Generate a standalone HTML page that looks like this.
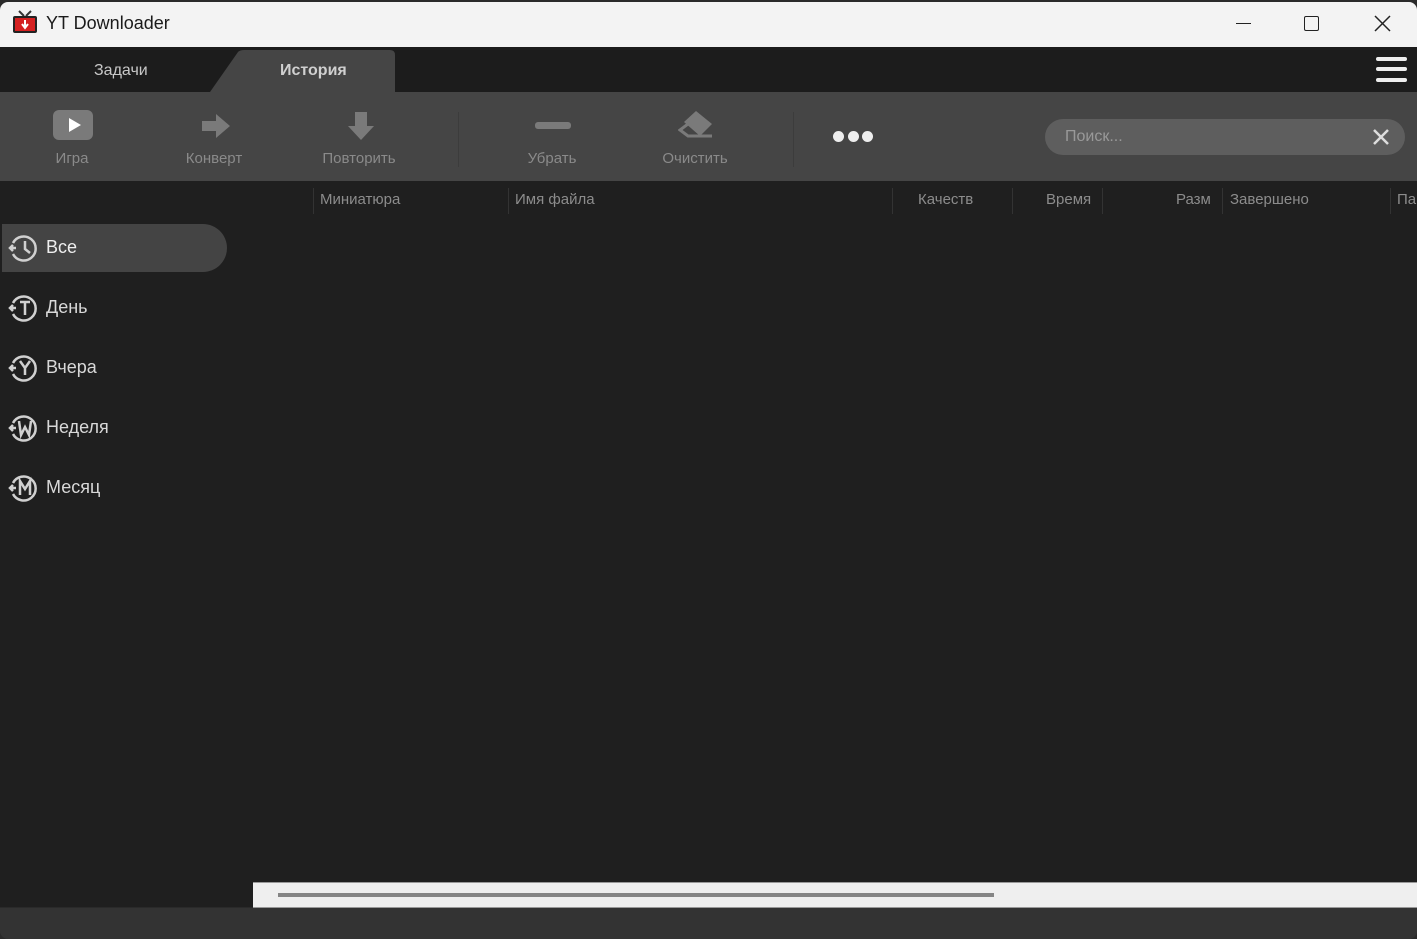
<!DOCTYPE html>
<html><head><meta charset="utf-8">
<style>
*{margin:0;padding:0;box-sizing:border-box}
body{width:1417px;height:939px;background:#2a2a2a;position:relative;overflow:hidden;font-family:"Liberation Sans","DejaVu Sans",sans-serif}
.abs{position:absolute}
.title{left:0;top:2px;width:1417px;height:45px;background:#f3f3f3;border-radius:8px 8px 0 0}
.ttext{left:46px;top:13px;font-size:18px;color:#1a1a1a}
.tabs{left:0;top:47px;width:1417px;height:45px;background:#1c1c1c}
.toolbar{left:0;top:92px;width:1417px;height:89px;background:#454545}
.body{left:0;top:181px;width:1417px;height:726px;background:#1f1f1f}
.lbl{font-size:15px;color:#8a8a8a;text-align:center}
.hdr{font-size:15px;color:#8c8c8c;top:191px}
.sep{width:1px;height:26px;background:#333;top:188px}
.side{font-size:18px;color:#d8d8d8;left:46px}
</style></head><body>
<div class="abs title"></div>
<svg class="abs" style="left:12px;top:9px" width="26" height="26" viewBox="0 0 26 26"><path d="M7 2l5 5M19 2l-5 5" stroke="#333" stroke-width="2"/><rect x="1" y="7" width="24" height="17" rx="2" fill="#222"/><rect x="3" y="9" width="20" height="13" fill="#d42020"/><path d="M13 11v7M10 15l3 4 3-4" stroke="#fff" stroke-width="2" fill="none"/></svg>
<div class="abs ttext">YT Downloader</div>
<div class="abs" style="left:1236px;top:23px;width:15px;height:1px;background:#222"></div>
<div class="abs" style="left:1304px;top:16px;width:15px;height:15px;border:1.5px solid #222;border-radius:2px"></div>
<svg class="abs" style="left:1374px;top:15px" width="17" height="17"><path d="M1 1L16 16M16 1L1 16" stroke="#222" stroke-width="1.5"/></svg>

<div class="abs tabs"></div>
<svg class="abs" style="left:210px;top:50px" width="186" height="42"><path d="M0 42L28 2Q30 0 34 0H180Q185 0 185 5V42Z" fill="#454545"/></svg>
<div class="abs" style="left:94px;top:62px;font-size:16px;color:#c8c8c8">Задачи</div>
<div class="abs" style="left:280px;top:62px;font-size:16px;color:#d0d0d0;font-weight:bold">История</div>
<div class="abs" style="left:1376px;top:57px;width:31px;height:4px;background:#eee;border-radius:2px"></div>
<div class="abs" style="left:1376px;top:67px;width:31px;height:4px;background:#eee;border-radius:2px"></div>
<div class="abs" style="left:1376px;top:78px;width:31px;height:4px;background:#eee;border-radius:2px"></div>

<div class="abs toolbar"></div>
<div class="abs" style="left:53px;top:110px;width:40px;height:30px;background:#7a7a7a;border-radius:6px"></div>
<svg class="abs" style="left:53px;top:110px" width="40" height="30"><path d="M16 8l12 7-12 7z" fill="#fff"/></svg>
<div class="abs lbl" style="left:32px;top:150px;width:80px">Игра</div>
<svg class="abs" style="left:200px;top:112px" width="32" height="28"><path d="M2 9h14V2l14 12-14 12v-7H2z" fill="#7a7a7a"/></svg>
<div class="abs lbl" style="left:164px;top:150px;width:100px">Конверт</div>
<svg class="abs" style="left:346px;top:110px" width="30" height="32"><path d="M9 2h12v14h7L15 30 2 16h7z" fill="#7a7a7a"/></svg>
<div class="abs lbl" style="left:304px;top:150px;width:110px">Повторить</div>
<div class="abs" style="left:458px;top:112px;width:1px;height:55px;background:#3c3c3c"></div>
<div class="abs" style="left:535px;top:122px;width:36px;height:7px;background:#7a7a7a;border-radius:3px"></div>
<div class="abs lbl" style="left:500px;top:150px;width:104px">Убрать</div>
<svg class="abs" style="left:678px;top:110px" width="40" height="32"><path d="M18 1L34 14 22 26 6 12z" fill="#7a7a7a"/><path d="M10 14l-8 6 8 6h24" stroke="#7a7a7a" stroke-width="3" fill="none"/></svg>
<div class="abs lbl" style="left:640px;top:150px;width:110px">Очистить</div>
<div class="abs" style="left:793px;top:112px;width:1px;height:55px;background:#3c3c3c"></div>
<div class="abs" style="left:833px;top:131px;width:11px;height:11px;background:#eee;border-radius:50%"></div>
<div class="abs" style="left:848px;top:131px;width:11px;height:11px;background:#eee;border-radius:50%"></div>
<div class="abs" style="left:862px;top:131px;width:11px;height:11px;background:#eee;border-radius:50%"></div>
<div class="abs" style="left:1045px;top:119px;width:360px;height:36px;background:#5e5e5e;border-radius:18px"></div>
<div class="abs" style="left:1065px;top:128px;font-size:16px;color:#999">Поиск...</div>
<svg class="abs" style="left:1373px;top:129px" width="16" height="16"><path d="M1 1L15 15M15 1L1 15" stroke="#ddd" stroke-width="2.5"/></svg>

<div class="abs body"></div>
<div class="abs sep" style="left:313px"></div>
<div class="abs sep" style="left:508px"></div>
<div class="abs sep" style="left:892px"></div>
<div class="abs sep" style="left:1012px"></div>
<div class="abs sep" style="left:1102px"></div>
<div class="abs sep" style="left:1222px"></div>
<div class="abs sep" style="left:1390px"></div>
<div class="abs hdr" style="left:320px">Миниатюра</div>
<div class="abs hdr" style="left:515px">Имя файла</div>
<div class="abs hdr" style="left:918px">Качеств</div>
<div class="abs hdr" style="left:1046px">Время</div>
<div class="abs hdr" style="left:1176px">Разм</div>
<div class="abs hdr" style="left:1230px">Завершено</div>
<div class="abs hdr" style="left:1397px">Па</div>

<div class="abs" style="left:2px;top:224px;width:225px;height:48px;background:#444;border-radius:0 24px 24px 0"></div>
<svg class="abs" style="left:8px;top:231px" width="34" height="280" fill="none" stroke="#d0d0d0" stroke-width="2.5">
<g><path d="M5 12A12 12 0 1 1 5 23"/><path d="M2 17h6M5 14l-3 3 3 3"/><path d="M17 10v8l5 4"/></g>
<g transform="translate(0,60)"><path d="M5 12A12 12 0 1 1 5 23"/><path d="M2 17h6M5 14l-3 3 3 3"/><path d="M12 11h10M17 11v13"/></g>
<g transform="translate(0,120)"><path d="M5 12A12 12 0 1 1 5 23"/><path d="M2 17h6M5 14l-3 3 3 3"/><path d="M12 10l5 7 5-7M17 17v7"/></g>
<g transform="translate(0,180)"><path d="M5 12A12 12 0 1 1 5 23"/><path d="M2 17h6M5 14l-3 3 3 3"/><path d="M11 10l2 14 4-8 4 8 2-14"/></g>
<g transform="translate(0,240)"><path d="M5 12A12 12 0 1 1 5 23"/><path d="M2 17h6M5 14l-3 3 3 3"/><path d="M12 24V10l5 8 5-8v14"/></g>
</svg>
<div class="abs side" style="top:237px;color:#eee">Все</div>
<div class="abs side" style="top:297px">День</div>
<div class="abs side" style="top:357px">Вчера</div>
<div class="abs side" style="top:417px">Неделя</div>
<div class="abs side" style="top:477px">Месяц</div>

<div class="abs" style="left:253px;top:882px;width:1164px;height:26px;background:#efefef;border-top:1px solid #999;border-bottom:1px solid #999"></div>
<div class="abs" style="left:278px;top:893px;width:716px;height:4px;background:#858585"></div>
<div class="abs" style="left:0;top:908px;width:1417px;height:31px;background:#333;border-radius:0 0 8px 8px"></div>
</body></html>
